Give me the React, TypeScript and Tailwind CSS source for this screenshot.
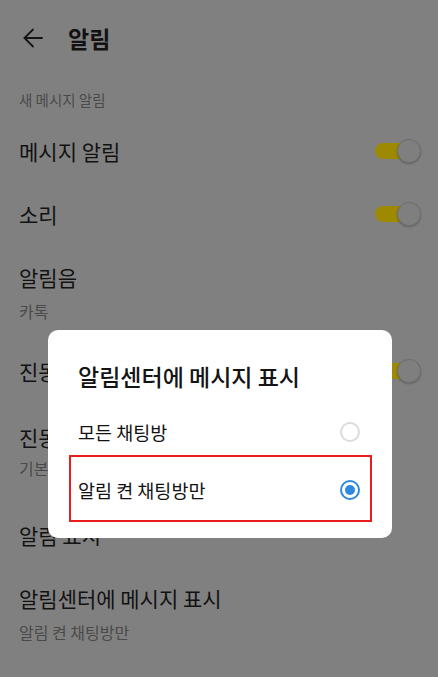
import React from 'react';

const font = { fontFamily: '"Noto Sans CJK KR", "Noto Sans", sans-serif' };

function Toggle() {
  return (
    <div className="relative w-[46px] h-[24px] shrink-0">
      <div className="absolute left-0 top-[4px] w-[34px] h-[16px] rounded-full bg-[#9d8a02]" />
      <div className="absolute right-0 top-0 w-[24px] h-[24px] rounded-full bg-[#7f7f7f] border border-[#6f6f6f] shadow-[0_1px_2px_rgba(0,0,0,0.25)]" />
    </div>
  );
}

function Radio({ checked }: { checked?: boolean }) {
  if (checked) {
    return (
      <div className="w-[20px] h-[20px] rounded-full border-2 border-[#2d88e0] flex items-center justify-center shrink-0">
        <div className="w-[10px] h-[10px] rounded-full bg-[#2d88e0]" />
      </div>
    );
  }
  return <div className="w-[20px] h-[20px] rounded-full border-2 border-[#dcdcdc] shrink-0" />;
}

export default function App() {
  return (
    <div className="relative w-[438px] h-[677px] overflow-hidden bg-[#808080] text-[#121212]" style={font}>
      {/* header */}
      <div className="h-[75px] flex items-center pl-[23px]">
        <svg width="20" height="20" viewBox="0 0 20 20" fill="none" stroke="#151515" strokeWidth="1.8" strokeLinecap="round" strokeLinejoin="round">
          <path d="M19 10H1.5" />
          <path d="M10 1.5 1.5 10 10 18.5" />
        </svg>
        <span className="ml-[25px] text-[23px] font-bold leading-[30px]">알림</span>
      </div>

      <div className="pl-[19px] pr-[17px]">
        <div className="mt-[15px] text-[14.5px] leading-[20px] text-[#4a4a4a]">새 메시지 알림</div>

        <div className="mt-[28px] h-[26px] flex items-center justify-between">
          <span className="text-[21px] leading-[26px]">메시지 알림</span>
          <Toggle />
        </div>

        <div className="mt-[37px] h-[26px] flex items-center justify-between">
          <span className="text-[21px] leading-[26px]">소리</span>
          <Toggle />
        </div>

        <div className="mt-[37px] text-[21px] leading-[26px]">알림음</div>
        <div className="mt-[10px] text-[16px] leading-[22px] text-[#4a4a4a]">카톡</div>

        <div className="mt-[36px] h-[26px] flex items-center justify-between">
          <span className="text-[21px] leading-[26px]">진동</span>
          <Toggle />
        </div>

        <div className="mt-[40px] text-[21px] leading-[26px]">진동 패턴</div>
        <div className="mt-[7px] text-[16px] leading-[22px] text-[#4a4a4a]">기본</div>

        <div className="mt-[43px] text-[21px] leading-[26px]">알림 표시</div>

        <div className="mt-[37px] text-[21px] leading-[26px]">알림센터에 메시지 표시</div>
        <div className="mt-[10px] text-[16px] leading-[22px] text-[#4a4a4a]">알림 켠 채팅방만</div>
      </div>

      {/* dialog */}
      <div className="absolute left-[48px] top-[330px] w-[344px] rounded-[10px] bg-white pt-[31px] pb-[19px]">
        <div className="pl-[30px] text-[23px] font-medium leading-[30px] text-[#141414]">알림센터에 메시지 표시</div>
        <div className="mt-[12px]">
          <div className="h-[58px] flex items-center justify-between pl-[30px] pr-[32px]">
            <span className="text-[18.5px] leading-[24px]">모든 채팅방</span>
            <Radio />
          </div>
          <div className="relative h-[58px] flex items-center justify-between pl-[30px] pr-[32px]">
            <span className="text-[18.5px] leading-[24px]">알림 켠 채팅방만</span>
            <Radio checked />
            <div className="absolute left-[21px] right-[20px] -top-[6px] -bottom-[3px] border-2 border-[#ea1c1c]" />
          </div>
        </div>
      </div>
    </div>
  );
}
